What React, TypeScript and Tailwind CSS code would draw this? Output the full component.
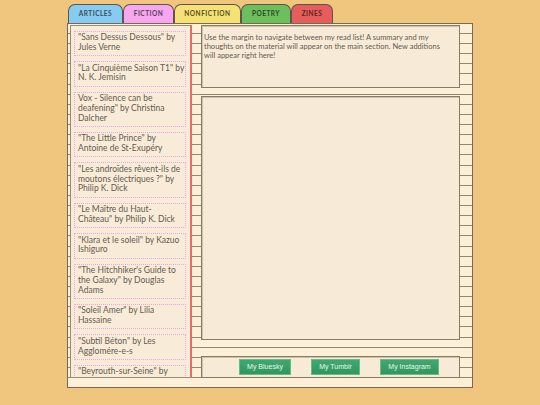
import React from "react";

const tabs = [
  { label: "ARTICLES", w: "w-[55px]", bg: "bg-[#86cbf2]", text: "text-[#3f4c58]" },
  { label: "FICTION", w: "w-[51px]", bg: "bg-[#f6a7ef]", text: "text-[#5a3f58]" },
  { label: "NONFICTION", w: "w-[67px]", bg: "bg-[#f6e274]", text: "text-[#55502a]" },
  { label: "POETRY", w: "w-[50px]", bg: "bg-[#6dbf5c]", text: "text-[#2f4a2a]" },
  { label: "ZINES", w: "w-[42px]", bg: "bg-[#e55e5c]", text: "text-[#5e2222]" },
];

const items: string[][] = [
  ['"Sans Dessus Dessous" by', "Jules Verne"],
  ['"La Cinquième Saison T1" by', "N. K. Jemisin"],
  ["Vox - Silence can be", 'deafening" by Christina', "Dalcher"],
  ['"The Little Prince" by', "Antoine de St-Exupéry"],
  ['"Les androïdes rêvent-ils de', 'moutons électriques ?" by', "Philip K. Dick"],
  ['"Le Maître du Haut-', 'Château" by Philip K. Dick'],
  ['"Klara et le soleil" by Kazuo', "Ishiguro"],
  ['"The Hitchhiker\'s Guide to', 'the Galaxy" by Douglas', "Adams"],
  ['"Soleil Amer" by Lilia', "Hassaine"],
  ['"Subtil Béton" by Les', "Agglomére-e-s"],
  ['"Beyrouth-sur-Seine" by', "Sabyl Ghoussoub"],
];

const font = { fontFamily: "Lato, 'Open Sans', sans-serif" };

export default function App() {
  return (
    <div className="w-[540px] h-[405px] bg-[#f0c67e] pl-[67px] pt-[4px] overflow-hidden" style={font}>
      <div className="flex pl-[1px]">
        {tabs.map((t) => (
          <div
            key={t.label}
            className={`${t.w} ${t.bg} ${t.text} h-[19px] border border-b-0 border-[#5b5450] rounded-t-[7px] flex items-center justify-center text-[6.5px] font-bold tracking-[0.5px]`}
          >
            {t.label}
          </div>
        ))}
      </div>
      <div className="w-[406px] h-[365px] border border-[#7a6852] bg-[#fdf0d8]">
        <div className="h-[354px] flex items-start bg-[repeating-linear-gradient(to_bottom,transparent_0px,transparent_9px,#958672_9px,#958672_10px,transparent_10px,transparent_10.12px)]">
          <div className="mt-[1px] ml-[2px] w-[122px] h-[353px] bg-[#f8ecd9] border-l border-t border-b border-[#9b8c77] border-r-2 border-r-[#e76d6b] overflow-hidden pt-[4.5px] pl-[3px] flex flex-col gap-[5px]">
            {items.map((lines, i) => (
              <div
                key={i}
                className="w-[112px] shrink-0 border border-dotted border-[#f2a2e8] pt-[1.5px] pb-[2.5px] pl-[3px] text-[8.5px] leading-[9.75px] text-[#655a50]"
              >
                {lines.map((l, j) => (
                  <div key={j} className="whitespace-nowrap">
                    {l}
                  </div>
                ))}
              </div>
            ))}
          </div>
          <div className="mt-[1px] ml-[9px] w-[259px] flex flex-col">
            <div className="h-[63px] bg-[#f7ebd8] border border-[#8a7a63] shadow-[inset_1px_1px_0_#cfc2ad] pt-[8px] pl-[2px] text-[7.5px] leading-[8.8px] text-[#655a50]">
              <div className="whitespace-nowrap">Use the margin to navigate between my read list! A summary and my</div>
              <div className="whitespace-nowrap">thoughts on the material will appear on the main section. New additions</div>
              <div className="whitespace-nowrap">will appear right here!</div>
            </div>
            <div className="mt-[8px] h-[244px] bg-[#f7ebd8] border border-[#8a7a63] shadow-[inset_1px_1px_0_#cfc2ad]" />
            <div className="mt-[16px] h-[22px] bg-[#f7ebd8] border border-[#8a7a63] shadow-[inset_1px_1px_0_#cfc2ad] flex items-center pl-[37px] gap-[20px]">
              {[
                ["My Bluesky", "w-[52px]"],
                ["My Tumblr", "w-[49px]"],
                ["My Instagram", "w-[59px]"],
              ].map(([l, w]) => (
                <div
                  key={l}
                  className={`${w} h-[16px] bg-gradient-to-b from-[#3fa871] to-[#319660] border border-[#66bd8c] flex items-center justify-center text-[7px] text-[#e9f6ec]`}
                  style={{ fontFamily: "'Liberation Sans', Arial, sans-serif" }}
                >
                  {l}
                </div>
              ))}
            </div>
          </div>
        </div>
      </div>
    </div>
  );
}
